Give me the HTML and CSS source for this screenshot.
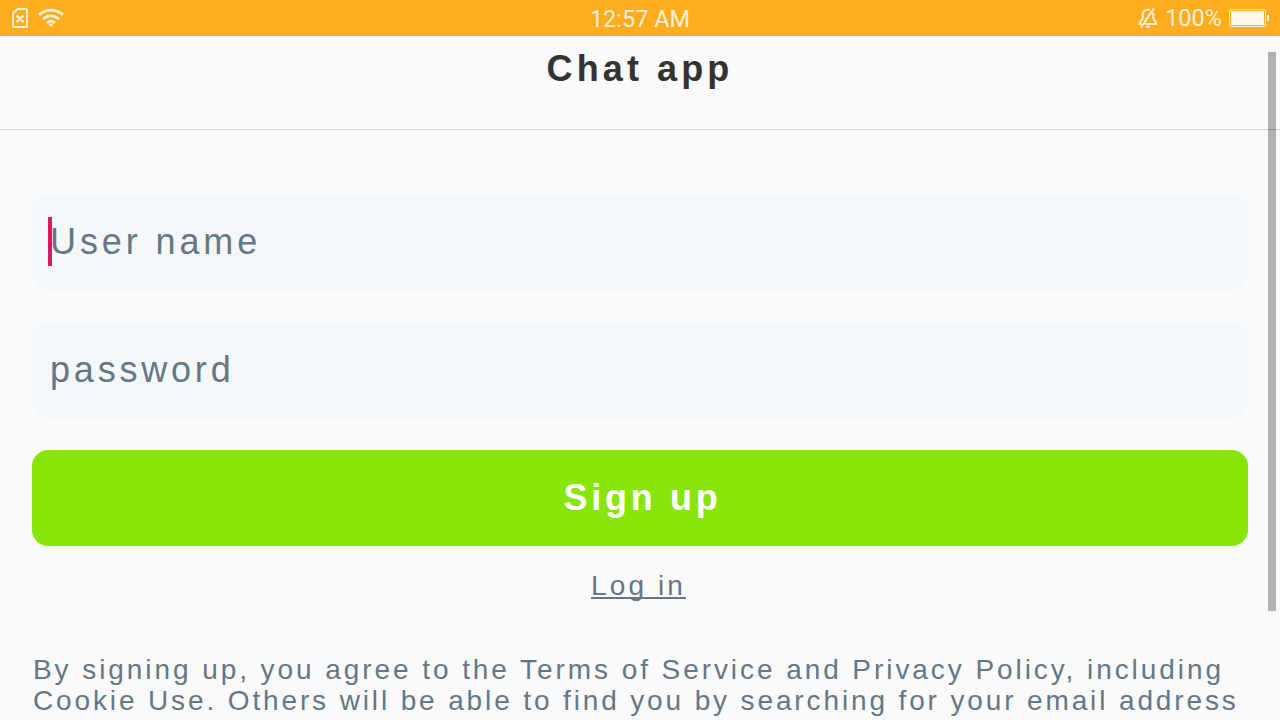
FILE: index.html
```html
<!DOCTYPE html>
<html lang="en">
<head>
<meta charset="utf-8">
<title>Chat app</title>
<link rel="stylesheet" href="styles.css">
</head>
<body>
<div class="screen">
  <div class="status">
    <div class="status-left">
      <svg class="sim" width="16" height="20" viewBox="0 0 16 20" fill="none" stroke="#fff0d6" stroke-width="1.900"><path d="M5.500 1H13.200Q15 1 15 2.800V17.200Q15 19 13.200 19H2.800Q1 19 1 17.200V5.500Z"/><path d="M4.600 7.400L11.400 14.200M11.400 7.400L4.600 14.200" stroke-width="2.200"/></svg>
      <svg class="wifi" width="26" height="20" viewBox="0 0 26 20" fill="none" stroke="#fff0d6" stroke-width="2.800"><path d="M1 6.800Q13-2.500 25 6.800M5 11Q13 4.500 21 11M9 15Q13 11.600 17 15"/><path d="M10.600 16.500Q13 14.700 15.400 16.500L13 19Z" fill="#fff0d6" stroke="none"/></svg>
    </div>
    <div class="clock">12:57 AM</div>
    <div class="status-right">
      <svg class="bell" width="20" height="22" viewBox="0 0 20 22" fill="none" stroke="#fff0d6" stroke-width="2.100"><path d="M15.300 5.500V11.500L18 15.500V17H7M12 3Q5 1.500 4.600 8V11.500L1.800 15.500V17H4M8 19.800H12M15.800 1.500L3 20.500"/></svg>
      <span class="percent">100%</span>
      <svg class="battery" width="40" height="18" viewBox="0 0 40 18"><rect x=".5" y=".5" width="36" height="17" rx="1.500" fill="none" stroke="#fff0d6"/><rect x="2" y="2" width="33" height="14" fill="#fff7e9"/><rect x="38" y="6" width="2" height="6" fill="#fff0d6"/></svg>
    </div>
  </div>
  <header class="header"><h1 class="title">Chat app</h1></header>
  <main class="form">
    <div class="field"><span class="hint hint-user">User name</span><span class="caret"></span></div>
    <div class="field"><span class="hint">password</span></div>
    <button class="signup">Sign up</button>
    <a class="login">Log in</a>
    <p class="legal"><span class="legal-terms">By signing up, you agree to the Terms of Service and Privacy Policy, including</span><br>Cookie Use. Others will be able to find you by searching for your email address</p>
  </main>
  <div class="scrollbar"></div>
</div>
</body>
</html>
```

FILE: styles.css
```css
* { box-sizing: border-box; }
body { margin: 0; background: #fafafa; }
.screen { position: relative; width: 1280px; height: 720px; overflow: hidden; font-family: "Liberation Sans", Arial, sans-serif; color: #657786; }
.status { height: 36px; display: grid; grid-template-columns: 1fr auto 1fr; background: #ffad1f; color: #fff0d6; font: 23.5px/36px Roboto, sans-serif; }
.status-left { display: flex; align-items: flex-start; padding-left: 12px; }
.sim { margin-top: 8px; }
.wifi { margin: 8px 0 0 10px; }
.clock { padding-top: 1px; height: 36px; }
.status-right { display: flex; justify-content: flex-end; padding-right: 11px; }
.bell { margin: 7px 7px 0 0; }
.percent { margin-right: 7px; }
.battery { margin-top: 9px; }
.header { height: 94px; border-bottom: 1px solid #ccd6dd; text-align: center; }
.title { margin: 0; padding-top: 12px; font-size: 36px; line-height: 41px; letter-spacing: 4.1px; color: #333; }
.form { display: flex; flex-direction: column; padding: 64px 32px 0; }
.field { position: relative; height: 96px; margin-bottom: 32px; padding: 0 18px; display: flex; align-items: center; border-radius: 16px; background: #f5f8fb; }
.hint { font-size: 36px; line-height: 42px; letter-spacing: 3.8px; }
.hint-user { letter-spacing: 3.9px; }
.caret { position: absolute; left: 16px; top: 23px; width: 4px; height: 49px; background: #d81b60; }
.signup { height: 96px; border: 0; padding: 0 0 0 5px; border-radius: 16px; background: #88e50a; color: #fff; font: bold 36px/42px "Liberation Sans", Arial, sans-serif; letter-spacing: 3.7px; }
.login { align-self: center; margin: 24px 3px 0 0; font-size: 28px; line-height: 32px; letter-spacing: 3.1px; text-decoration: underline; text-decoration-thickness: 2px; text-decoration-skip-ink: none; text-underline-offset: 2px; }
.legal { margin: 52px 0 0 1px; font-size: 28px; line-height: 31px; letter-spacing: 2.87px; white-space: nowrap; }
.legal-terms { letter-spacing: 2.93px; }
.scrollbar { position: absolute; right: 4px; top: 52px; width: 8px; height: 559px; background: rgba(0, 0, 0, .285); }
```
